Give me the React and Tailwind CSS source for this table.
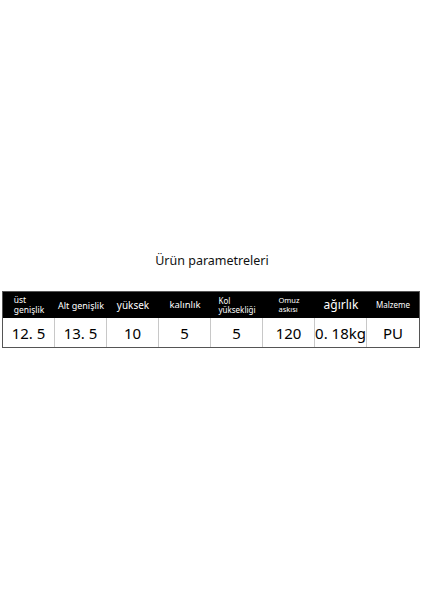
export default function App() {
  const font = { fontFamily: '"Noto Sans", "Open Sans", Arial, sans-serif' };
  const headers = [
    { lines: ["üst", "genişlik"], cls: "text-[8.5px] leading-[10px]" },
    { lines: ["Alt genişlik"], cls: "text-[9px] leading-[11px]" },
    { lines: ["yüksek"], cls: "text-[10px] leading-[12px]" },
    { lines: ["kalınlık"], cls: "text-[9.5px] leading-[12px]" },
    { lines: ["Kol", "yüksekliği"], cls: "text-[8px] leading-[9.5px]" },
    { lines: ["Omuz", "askısı"], cls: "text-[7.5px] leading-[9px]" },
    { lines: ["ağırlık"], cls: "text-[12px] leading-[14px]" },
    { lines: ["Malzeme"], cls: "text-[8px] leading-[10px]" },
  ];
  const values = ["12. 5", "13. 5", "10", "5", "5", "120", "0. 18kg", "PU"];
  return (
    <div className="w-[424px] h-[600px] bg-white" style={font}>
      <div className="pt-[252px] text-center text-[12.5px] leading-[18px] text-[#111]">
        Ürün parametreleri
      </div>
      <div className="mt-[21px] mx-[2px] w-[418px] border border-[#555]">
        <div className="grid grid-cols-8 h-[26px] bg-black text-white">
          {headers.map((h, i) => (
            <div key={i} className="flex items-center justify-center">
              <div className={"text-left " + h.cls}>
                {h.lines.map((l, j) => (
                  <div key={j}>{l}</div>
                ))}
              </div>
            </div>
          ))}
        </div>
        <div className="grid grid-cols-8 h-[29px] text-black">
          {values.map((v, i) => (
            <div
              key={i}
              className={
                "flex items-center justify-center text-[15px] leading-[16px] " +
                (i < 7 ? "border-r border-[#c8c8c8]" : "")
              }
            >
              {v}
            </div>
          ))}
        </div>
      </div>
    </div>
  );
}
